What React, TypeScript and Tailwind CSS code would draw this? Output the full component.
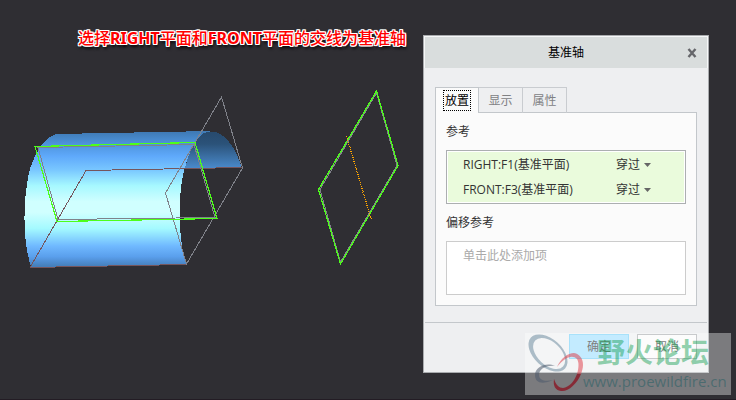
import React, { useState } from 'react';

const TABS = ['放置', '显示', '属性'];

const REFERENCES = [
  { id: 'right', name: 'RIGHT:F1(基准平面)' },
  { id: 'front', name: 'FRONT:F3(基准平面)' },
];

const Scene: React.FC = () => (
  <svg
    width="400"
    height="190"
    viewBox="10 84 400 190"
    fill="none"
    shapeRendering="crispEdges"
    className="block shrink-0"
    aria-hidden="true"
  >
    <defs>
      <linearGradient id="shell" gradientUnits="userSpaceOnUse" x1="0" y1="132" x2="0" y2="266">
        <stop offset="0" stopColor="#3f7ab5" />
        <stop offset="0.08" stopColor="#4c91d8" />
        <stop offset="0.18" stopColor="#5fa9fb" />
        <stop offset="0.28" stopColor="#78c6ff" />
        <stop offset="0.4" stopColor="#a6f8ff" />
        <stop offset="0.52" stopColor="#d0ffff" />
        <stop offset="0.6" stopColor="#d0ffff" />
        <stop offset="0.72" stopColor="#a4faff" />
        <stop offset="0.85" stopColor="#70b9ff" />
        <stop offset="0.93" stopColor="#5a9fec" />
        <stop offset="1" stopColor="#457fbb" />
      </linearGradient>
      <linearGradient id="inside" gradientUnits="userSpaceOnUse" x1="0" y1="131" x2="0" y2="168">
        <stop offset="0" stopColor="#27496c" />
        <stop offset="0.35" stopColor="#2b5279" />
        <stop offset="1" stopColor="#4a8acb" />
      </linearGradient>
    </defs>

    {/* Half cylinder */}
    <path
      d="M56 134 L212 131 C196 133 186 158 182 180 C178 206 179 242 186 264 L31 267 C24 245 22 210 28 177 C32 157 43 138 56 134Z"
      fill="url(#shell)"
    />
    <path d="M204 133 C223 126 235 147 242 168 L185 168 C189 152 195 138 204 133Z" fill="url(#inside)" />

    {/* Datum planes */}
    <path d="M30 267.5 L86 170.5 L242 167.5 M30 267.5 L186 264.5" stroke="#75555c" />
    <path d="M221.5 97 L242.5 168 L186.5 264 L165.5 193Z" stroke="#80828a" />
    <path d="M38 147.5 L194 144.5 L215 217.5 L58 219.5Z" stroke="#80828a" />
    <path d="M35 146.5 L195 142.5 L217 218.5 L57 221.5Z" stroke="#4dff1a" strokeWidth="1.2" />

    {/* Selected plane and resulting axis */}
    <path d="M376.5 93 L397 165.5 L340.5 262 L320 189.5Z" stroke="#80828a" />
    <path d="M376.5 91 L398 165.5 L340.5 264 L318.5 189.5Z" stroke="#4dff1a" strokeWidth="1.2" />
    <path d="M346.5 136 L371 219" stroke="#ffa500" strokeWidth="1.3" strokeDasharray="1 1" />
  </svg>
);

const Watermark: React.FC = () => (
  <div className="pointer-events-none absolute right-[5px] bottom-1 flex h-[62px] w-[206px] bg-white/37">
    <svg width="58" height="62" viewBox="0 0 58 62" className="shrink-0" aria-hidden="true">
      <path
        fillRule="evenodd"
        fill="#708ca0"
        fillOpacity="0.55"
        d="M5.9 4.6 A23 14 42 0 1 40.1 35.4 A23 14 42 0 1 5.9 4.6Z M10.2 7.5 A19 11.5 43 0 0 38 33.5 A19 11.5 43 0 0 10.2 7.5Z"
      />
      <path
        fill="#4c596c"
        fillOpacity="0.55"
        d="M30 33 C21 29 10 34 10 42 C10 50 17 52 28 47 C20 49 14 47 14 42 C14 36 21 32 30 33Z"
      />
      <path
        fill="#dd3440"
        fillOpacity="0.5"
        d="M32 34 C36 25 43 20 49 20 C55 21 58 26 58 32 C58 35 57 38 56 41 L52 41 C54 34 54 29 52 26 C47 21 39 25 32 34Z"
      />
      <path
        fill="#8a1724"
        fillOpacity="0.8"
        d="M56 41 C52 51 43 59 36 58 C30 57 28 53 29 46 C31 52 34 55 38 55 C44 54 49 49 52 41Z"
      />
    </svg>
    <div className="flex flex-col whitespace-nowrap">
      <span className="ml-[14px] font-['Noto_Sans_CJK_SC',sans-serif] text-[28px] leading-9 font-bold text-[#0b9a4b]/45">
        野火论坛
      </span>
      <span className="font-['Open_Sans',sans-serif] text-[15px] leading-6 text-[#2b6166]/60">www.proewildfire.cn</span>
    </div>
  </div>
);

const DatumAxisDialog: React.FC = () => {
  const [activeTab, setActiveTab] = useState(TABS[0]);

  return (
    <section
      role="dialog"
      aria-labelledby="dialog-title"
      className="w-[286px] shrink-0 border border-[#a9abae] bg-[#eeeff1] text-xs text-[#333]"
    >
      <header className="relative flex h-8 items-center justify-center border border-b-0 border-[#f6f7f8] bg-[#d9dddd]">
        <h1 id="dialog-title" className="text-black">
          基准轴
        </h1>
        <button type="button" aria-label="关闭" className="absolute right-[10px] text-[#66676b]">
          <svg width="10" height="10" viewBox="0 0 10 10" stroke="currentColor" strokeWidth="2.4">
            <path d="M1.5 1 L8.5 9 M8.5 1 L1.5 9" />
          </svg>
        </button>
      </header>

      <div className="px-[11px] pt-[19px] pb-4">
        <div role="tablist" className="flex">
          {TABS.map((tab) => (
            <button
              key={tab}
              type="button"
              role="tab"
              aria-selected={tab === activeTab}
              onClick={() => setActiveTab(tab)}
              className={
                tab === activeTab
                  ? 'relative z-10 -mb-px flex h-[26px] w-11 items-center justify-center border border-b-0 border-[#c3c7cb] bg-[#fbfbfb] text-black'
                  : 'flex h-[26px] w-11 items-center justify-center border-t border-r border-[#c9ccd0] text-[#808184]'
              }
            >
              <span className={tab === activeTab ? 'border border-dotted border-black px-px leading-[19px]' : ''}>
                {tab}
              </span>
            </button>
          ))}
        </div>

        <div role="tabpanel" className="-mt-px border border-[#c3c7cb] bg-[#fbfbfb] px-[10px] pb-[10px]">
          <h2 className="pt-[10px] pb-[9px] leading-[18px]">参考</h2>
          <ul className="border border-[#acafb1] bg-white p-px">
            {REFERENCES.map((ref) => (
              <li key={ref.id} className="flex h-[25px] items-center bg-[#eafbdc] pl-[15px]">
                <label htmlFor={ref.id} className="flex-1">
                  {ref.name}
                </label>
                <span className="relative flex w-[68px] items-center">
                  <select id={ref.id} defaultValue="through" className="w-9 appearance-none bg-transparent">
                    <option value="through">穿过</option>
                    <option value="normal">法向</option>
                  </select>
                  <svg width="7" height="4" viewBox="0 0 7 4" className="pointer-events-none absolute left-7 fill-[#666]">
                    <path d="M0 0 H7 L3.5 4Z" />
                  </svg>
                </span>
              </li>
            ))}
          </ul>

          <label htmlFor="offset" className="block pt-[10px] pb-[9px] leading-[18px]">
            偏移参考
          </label>
          <textarea
            id="offset"
            placeholder="单击此处添加项"
            className="block h-[54px] w-full resize-none border border-[#ccc] bg-white px-4 py-[5px] leading-[18px] placeholder:text-[#aaa]"
          />
        </div>
      </div>

      <footer className="mx-px flex justify-end gap-2 border-t border-[#c3c7cb] pt-[11px] pr-[10px] pb-[13px]">
        <button type="button" className="h-[25px] w-[60px] border border-[#76d0f8] bg-[#a0dfff]">
          确定
        </button>
        <button type="button" className="h-[25px] w-[60px] border border-[#a9abae] bg-[#fbfbfb]">
          取消
        </button>
      </footer>
    </section>
  );
};

const App: React.FC = () => {
  return (
    <main className="relative flex min-h-screen items-start border-b border-[#231c24] bg-[#2f2e33] pt-[35px] pr-[27px] font-['Open_Sans','Noto_Sans_CJK_SC',sans-serif]">
      <div className="-mt-[9px] min-w-0 flex-1">
        <p className="ml-[78px] font-['Noto_Sans','Noto_Sans_CJK_SC',sans-serif] text-base leading-6 font-medium whitespace-nowrap text-[#ff0000] [text-shadow:1px_0_white,-1px_0_white,0_1px_white,0_-1px_white,1px_1px_white,-1px_1px_white,1px_-1px_white,-1px_-1px_white,1px_3px_3px_black]">
          选择<b>RIGHT</b>平面和<b>FRONT</b>平面的交线为基准轴
        </p>
        <div className="mt-[34px] ml-[10px]">
          <Scene />
        </div>
      </div>
      <DatumAxisDialog />
      <Watermark />
    </main>
  );
};

export default App;
